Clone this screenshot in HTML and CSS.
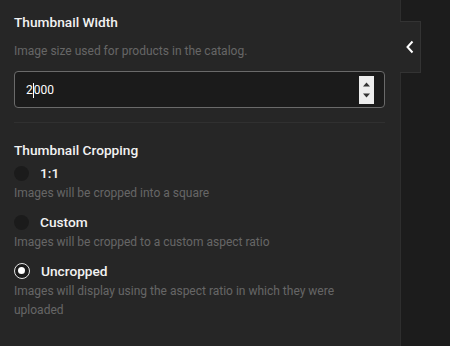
FILE: index.html
```html
<!DOCTYPE html>
<html lang="en">
<head>
    <meta charset="UTF-8">
    <title>Thumbnail Settings</title>
    <link rel="stylesheet" href="styles.css">
</head>
<body>
    <div class="layout">
        <div class="panel">
            <section class="field">
                <h3 class="field-title">Thumbnail Width</h3>
                <p class="field-help">Image size used for products in the catalog.</p>
                <div class="number-input">
                    <span class="number-value">2<span class="caret"></span>000</span>
                    <span class="spinner">
                        <svg width="15" height="28" viewBox="0 0 15 28">
                            <path d="M4 10.5 L7.5 6.5 L11 10.5 Z" fill="#333"/>
                            <path d="M4 17.5 L7.5 21.5 L11 17.5 Z" fill="#333"/>
                        </svg>
                    </span>
                </div>
            </section>

            <hr class="divider">

            <section class="field">
                <h3 class="field-title">Thumbnail Cropping</h3>
                <div class="option">
                    <span class="radio"></span>
                    <span class="option-label">1:1</span>
                </div>
                <p class="option-help">Images will be cropped into a square</p>
                <div class="option">
                    <span class="radio"></span>
                    <span class="option-label">Custom</span>
                </div>
                <p class="option-help">Images will be cropped to a custom aspect ratio</p>
                <div class="option">
                    <span class="radio checked"></span>
                    <span class="option-label">Uncropped</span>
                </div>
                <p class="option-help">Images will display using the aspect ratio in which they were uploaded</p>
            </section>
        </div>

        <div class="side">
            <button class="collapse-tab" type="button">
                <svg width="10" height="14" viewBox="0 0 10 14">
                    <path d="M7.5 1.5 L2.5 7 L7.5 12.5" fill="none" stroke="#fff" stroke-width="2"/>
                </svg>
            </button>
        </div>
    </div>
</body>
</html>
```

FILE: styles.css
```css
body {
    margin: 0;
    background-color: #1c1c1c;
    font-family: Roboto, "Liberation Sans", sans-serif;
    color: #f2f2f2;
}

.layout {
    display: flex;
    height: 346px;
}

/* Settings panel */
.panel {
    width: 371px;
    padding: 12px 15px 0 14px;
    background-color: #262626;
    border-right: 1px solid #2e2e2e;
}

.field-title {
    margin: 0;
    font-size: 13.7px;
    font-weight: 500;
    line-height: 20px;
    color: #f2f2f2;
}

.field-help {
    margin: 11px 0 12px;
    font-size: 12px;
    line-height: 16px;
    color: #666;
}

.number-input {
    display: flex;
    align-items: center;
    justify-content: space-between;
    height: 35px;
    padding: 0 10px 0 11px;
    background-color: #1b1b1b;
    border: 1px solid #6a6a6a;
    border-radius: 4px;
}

.number-value {
    font-size: 12px;
    color: #fff;
}

.caret {
    display: inline-block;
    width: 1px;
    height: 15px;
    margin: 0 0 -4px;
    background-color: #fff;
    vertical-align: baseline;
}

.spinner {
    display: flex;
    width: 15px;
    height: 28px;
    background-color: #ededed;
}

.divider {
    margin: 14px 0 17px;
    border: none;
    border-top: 1px solid #303030;
}

/* Radio options */
.option {
    display: flex;
    align-items: center;
    gap: 11px;
    margin-top: 3px;
}

.radio {
    box-sizing: border-box;
    width: 15px;
    height: 15px;
    border-radius: 50%;
    background-color: #1b1b1b;
}

.radio.checked {
    position: relative;
    width: 16px;
    height: 16px;
    border: 1.5px solid #e6e6e6;
}

.radio.checked::after {
    content: "";
    position: absolute;
    top: 3px;
    left: 3px;
    width: 7px;
    height: 7px;
    border-radius: 50%;
    background-color: #fff;
}

.option-label {
    font-size: 13.7px;
    font-weight: 500;
    line-height: 20px;
    color: #f2f2f2;
}

.option-help {
    margin: 1px 0 9px;
    font-size: 12px;
    line-height: 19px;
    color: #666;
}

/* Collapse tab */
.side {
    flex: 1;
}

.collapse-tab {
    display: flex;
    align-items: center;
    justify-content: center;
    width: 21px;
    height: 52px;
    margin: 21px 0 0 -1px;
    padding: 0;
    background-color: #262626;
    border: 1px solid #333;
    border-left: none;
    cursor: pointer;
}
```
